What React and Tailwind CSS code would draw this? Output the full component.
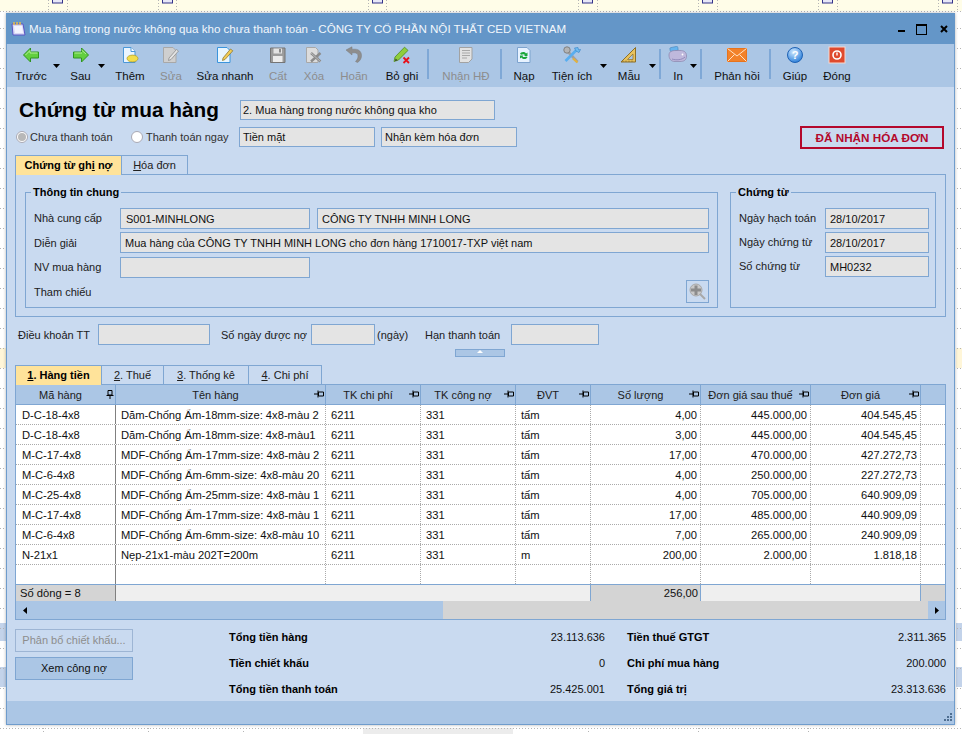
import { Fragment } from 'react'

const Back = () => (
  <svg className="absolute inset-0 w-[962px] h-[734px]" viewBox="0 0 962 734">
    <rect x="0" y="0" width="962" height="11" fill="#fffde8" />
    <rect x="0" y="348" width="6" height="20" fill="#fff6d8" />
    <rect x="956" y="348" width="6" height="20" fill="#fff6d8" />
    <rect x="0" y="623" width="6" height="18" fill="#c3d3ea" />
    <rect x="0" y="667" width="6" height="20" fill="#c3d3ea" />
    <rect x="956" y="623" width="6" height="18" fill="#c3d3ea" />
    <rect x="956" y="667" width="6" height="20" fill="#c3d3ea" />
    <rect x="363" y="728" width="150" height="6" fill="#ececec" />
    {[28, 48, 68, 88, 108, 128, 148, 168, 188, 208, 228, 248, 268, 288, 308, 328, 348, 368, 388, 408, 428, 448, 468, 488, 508, 528, 548, 568, 588, 608, 628, 648, 668, 688, 708, 728].map((y) => (
      <line key={y} x1="0" x2="962" y1={y + 0.5} y2={y + 0.5} stroke="#b5b5b5" strokeDasharray="1 2" />
    ))}
    <line x1="0" x2="962" y1="11.5" y2="11.5" stroke="#b5b5b5" strokeDasharray="1 2" />
    {[48, 67, 158, 176, 368, 386, 578, 597, 698, 717, 818, 837, 938, 957].map((x) => (
      <line key={x} x1={x + 0.5} x2={x + 0.5} y1="0" y2="11" stroke="#b5b5b5" strokeDasharray="1 2" />
    ))}
    {[43, 148, 243, 588, 698, 808].map((x) => (
      <line key={x} x1={x + 0.5} x2={x + 0.5} y1="728" y2="734" stroke="#b5b5b5" strokeDasharray="1 2" />
    ))}
    {[52, 162, 372, 582, 702, 822, 942].map((x) => (
      <rect key={x} x={x + 0.5} y="-4" width="10" height="7" fill="#e8e8f8" stroke="#33338a" />
    ))}
  </svg>
)

const ArrowLeft = () => (
  <svg width="18" height="18" viewBox="0 0 18 18"><path d="M1.5 9 L8.5 2 V6 H16.5 V12 H8.5 V16 Z" fill="#62cf3f" stroke="#2f9420" strokeLinejoin="round" /><path d="M3.5 9 L8 4.5 V7 H15.5" fill="none" stroke="#b4ef98" /></svg>
)
const ArrowRight = () => (
  <svg width="18" height="18" viewBox="0 0 18 18"><path d="M16.5 9 L9.5 2 V6 H1.5 V12 H9.5 V16 Z" fill="#62cf3f" stroke="#2f9420" strokeLinejoin="round" /><path d="M9.5 4 L14 8 M2.5 7 H10" fill="none" stroke="#b4ef98" /></svg>
)
const Page = ({ fill = '#eaf5ff', stroke = '#4a97d8' }) => (
  <path d="M2.5 1.5 H10 L14 5.5 V16.5 H2.5 Z" fill={fill} stroke={stroke} />
)
const Them = () => (
  <svg width="18" height="18" viewBox="0 0 18 18"><Page /><path d="M10 1.5 V5.5 H14" fill="#fff" stroke="#4a97d8" /><ellipse cx="11.5" cy="12.5" rx="5.5" ry="3.4" fill="#f3dd4a" stroke="#a8952a" strokeWidth="0.7" /></svg>
)
const Sua = () => (
  <svg width="18" height="18" viewBox="0 0 18 18"><path d="M1.5 1.5 H11 L14 4.5 V16.5 H1.5 Z" fill="#cfcfcf" stroke="#a8a8a8" /><path d="M7 12 L14.5 3.5 L16.5 5 L9 13.5 L6.5 14.5 Z" fill="#e4e4e4" stroke="#8e8e8e" strokeWidth="0.8" /></svg>
)
const SuaNhanh = () => (
  <svg width="18" height="18" viewBox="0 0 18 18"><path d="M1.5 1.5 H11 L14 4.5 V16.5 H1.5 Z" fill="#e9f6ff" stroke="#3a94dc" /><path d="M7 12 L14.5 3 L16.8 4.8 L9 13.5 L6.5 14.5 Z" fill="#f3cd55" stroke="#8f7a35" strokeWidth="0.8" /></svg>
)
const Cat = () => (
  <svg width="18" height="18" viewBox="0 0 18 18"><path d="M1.5 2 H16 V16.5 H1.5 Z" fill="#9c9c9c" stroke="#757575" /><rect x="4.5" y="2.5" width="8.5" height="5" fill="#e3e3e3" /><rect x="4" y="10" width="9.5" height="6" fill="#ececec" /><rect x="10" y="3" width="2" height="3.5" fill="#8a8a8a" /></svg>
)
const Xoa = () => (
  <svg width="18" height="18" viewBox="0 0 18 18"><path d="M1.5 1.5 H10.5 L13 4 V16.5 H1.5 Z" fill="#dcdcdc" stroke="#a8a8a8" /><path d="M6 7 L15.5 15.5 M15.5 7 L6 15.5" stroke="#8b8b8b" strokeWidth="2.4" /><path d="M6 7 L15.5 15.5" stroke="#c4c4c4" strokeWidth="0.8" /></svg>
)
const Hoan = () => (
  <svg width="18" height="18" viewBox="0 0 18 18"><path d="M1 4 L7 0.8 V3.2 H10 C14 3.2 16.5 6 16.5 9.5 C16.5 12.5 15 15 12.5 16.5 L10.5 15.5 C12.5 13.5 13 11.5 13 10 C13 8 11.5 6.8 9.5 6.8 H7 V9 Z" fill="#8e8e8e" stroke="#7a7a7a" strokeWidth="0.5" /></svg>
)
const BoGhi = () => (
  <svg width="18" height="18" viewBox="0 0 18 18"><path d="M1 15.5 L2 11 L11.5 1.2 L15 4.4 L5.5 14 Z" fill="#8fce3b" stroke="#4f8a1f" strokeWidth="0.8" /><path d="M2 15 L2.6 12.5 L4.5 14.2 Z" fill="#333" /><path d="M10.5 11.5 L16 17 M16 11.5 L10.5 17" stroke="#e8101a" strokeWidth="1.8" /></svg>
)
const NhanHd = () => (
  <svg width="18" height="18" viewBox="0 0 18 18"><path d="M2.5 1.5 H15 V13 L11.5 16.5 H2.5 Z" fill="#e2e2e2" stroke="#a2a2a2" /><path d="M5 4.5 H13 M5 7 H13 M5 9.5 H13 M5 12 H10" stroke="#a8a8a8" /></svg>
)
const Nap = () => (
  <svg width="18" height="18" viewBox="0 0 18 18"><path d="M2.5 1.5 H12 L15 4.5 V16.5 H2.5 Z" fill="#e7f2ff" stroke="#7da3ce" /><path d="M5 8 C5.5 5.8 9.5 5 11 7.5 L12.5 6.5 V10 H9 L10 9 C9 8 7.5 8 6.5 8.8 Z" fill="#1aa63a" /><path d="M12.5 11 C12 13.2 8 14 6.5 11.5 L5 12.5 V9.5 H8.5 L7.5 10.5 C8.5 11.3 10 11.2 11 10.4 Z" fill="#1aa63a" /></svg>
)
const TienIch = () => (
  <svg width="20" height="18" viewBox="0 0 20 18"><path d="M4 3.5 L15.5 16" stroke="#a0a0a0" strokeWidth="2.6" /><circle cx="5" cy="4" r="3.2" fill="#b4b4b4" stroke="#808080" /><path d="M3.5 15 L14 4.5" stroke="#58aef0" strokeWidth="2.6" /><path d="M12.5 2 L14 5 L17 6.5 L18.5 3.5 L16.5 3.8 L16 1.5 Z" fill="#6fbdf3" stroke="#2f7fc4" strokeWidth="0.6" /><path d="M11 12.5 L15.5 16.5" stroke="#e2b23f" strokeWidth="2.2" /></svg>
)
const Mau = () => (
  <svg width="18" height="18" viewBox="0 0 18 18"><path d="M1 16 L15.5 1.5 V16 Z" fill="#e8c25e" stroke="#8c6f28" /><path d="M7.5 13.5 L13 8 V13.5 Z" fill="#abc6e5" stroke="#8c6f28" strokeWidth="0.7" /><path d="M3 16 V14.5 M6 16 V14.5 M9 16 V14.5 M12 16 V14.5" stroke="#7a5f20" strokeWidth="0.6" /></svg>
)
const InIcon = () => (
  <svg width="20" height="18" viewBox="0 0 20 18"><rect x="2" y="1" width="8" height="4" rx="1" transform="rotate(-12 6 3)" fill="#66b4ee" stroke="#4786bd" strokeWidth="0.6" /><path d="M1 9 C1 5.5 4 4.5 8 4.5 H12 C16 4.5 18.5 6 18.5 10 C18.5 14 16 15.5 12 15.5 H7 C3 15.5 1 13 1 9 Z" fill="#bfb8dc" stroke="#8984aa" strokeWidth="0.7" /><path d="M4 13 C8 14.5 14 14 17 11" fill="none" stroke="#9089ba" /><circle cx="14.5" cy="8.5" r="0.9" fill="#fff" /></svg>
)
const Mail = () => (
  <svg width="20" height="16" viewBox="0 0 20 16"><rect x="0.5" y="1.5" width="19" height="13" fill="#f2822a" stroke="#e8731c" /><path d="M0.5 1.5 L10 9 L19.5 1.5 M0.5 14.5 L7.5 7.5 M19.5 14.5 L12.5 7.5" fill="none" stroke="#ffe2c4" /></svg>
)
const Help = () => (
  <svg width="18" height="18" viewBox="0 0 18 18">
    <defs><radialGradient id="hg" cx="0.4" cy="0.3" r="0.8"><stop offset="0" stopColor="#cfe8ff" /><stop offset="1" stopColor="#1a74d6" /></radialGradient></defs>
    <circle cx="9" cy="9" r="7.5" fill="url(#hg)" stroke="#1f62b4" />
    <text x="9" y="13" textAnchor="middle" fontSize="11" fontWeight="700" fontFamily="Liberation Sans, sans-serif" fill="#fff">?</text>
  </svg>
)
const Power = () => (
  <svg width="18" height="18" viewBox="0 0 18 18"><rect x="1" y="1" width="16" height="16" fill="#df4a2e" stroke="#f6d8cf" /><circle cx="9" cy="9" r="4" fill="none" stroke="#fff" strokeWidth="1.6" /><path d="M9 6.5 V9.5" stroke="#fff" strokeWidth="1.4" /></svg>
)
const Zoom = () => (
  <svg width="17" height="17" viewBox="0 0 17 17"><circle cx="7" cy="7" r="6" fill="#c8c8c8" stroke="#a8a8a8" /><path d="M11 11 L16 16" stroke="#a8a8a8" strokeWidth="2" /><path d="M7 2.5 V12 M2 7 H12" stroke="#8c8c8c" strokeWidth="3" /></svg>
)

const Caret = ({ className }) => (
  <div className={`h-[38px] flex items-start justify-center pt-[20px] ${className}`}>
    <svg width="7" height="4" viewBox="0 0 7 4"><path d="M0 0 H7 L3.5 4 Z" fill="#000" /></svg>
  </div>
)
const Sep = ({ className = '' }) => <div className={`w-[2px] h-[30px] mt-[5px] shrink-0 bg-[#7fa8d6] ${className}`} />

function Tool({ icon: Icon, label, off, className }) {
  return (
    <div className={`shrink-0 flex flex-col items-center ${className}`}>
      <div className="h-[22px] flex items-center justify-center"><Icon /></div>
      <div className={`mt-[3px] leading-[14px] whitespace-nowrap text-[11.5px] ${off ? 'text-[#8d8d8d]' : 'text-[#101010]'}`}>{label}</div>
    </div>
  )
}

const Field = ({ className = '', children }) => (
  <div className={`h-[21px] leading-[20px] border border-[#7fa6d2] bg-[#e4e4e4] pl-[5px] text-[#101010] whitespace-nowrap overflow-hidden shrink-0 ${className}`}>{children}</div>
)

const Pin = ({ upright }) => upright ? (
  <svg width="8" height="9" viewBox="0 0 8 9"><path d="M2 0.5 H6 V5 H2 Z M0.5 5.5 H7.5 M4 5.5 V9" fill="none" stroke="#000" /></svg>
) : (
  <svg width="10" height="8" viewBox="0 0 10 8"><path d="M9.5 2 V6 H4.5 V2 Z M4 0.5 V7.5 M0 4 H4" fill="none" stroke="#000" /></svg>
)

const cols = 'grid grid-cols-[100px_210px_95px_95px_75px_110px_110px_110px_24px]'

const heads = ['Mã hàng', 'Tên hàng', 'TK chi phí', 'TK công nợ', 'ĐVT', 'Số lượng', 'Đơn giá sau thuế', 'Đơn giá']

const rows = [
  ['D-C-18-4x8', 'Dăm-Chống Ẩm-18mm-size: 4x8-màu 2', '6211', '331', 'tấm', '4,00', '445.000,00', '404.545,45'],
  ['D-C-18-4x8', 'Dăm-Chống Ẩm-18mm-size: 4x8-màu1', '6211', '331', 'tấm', '3,00', '445.000,00', '404.545,45'],
  ['M-C-17-4x8', 'MDF-Chống Ẩm-17mm-size: 4x8-màu 2', '6211', '331', 'tấm', '17,00', '470.000,00', '427.272,73'],
  ['M-C-6-4x8', 'MDF-Chống Ẩm-6mm-size: 4x8-màu 20', '6211', '331', 'tấm', '4,00', '250.000,00', '227.272,73'],
  ['M-C-25-4x8', 'MDF-Chống Ẩm-25mm-size: 4x8-màu 1', '6211', '331', 'tấm', '4,00', '705.000,00', '640.909,09'],
  ['M-C-17-4x8', 'MDF-Chống Ẩm-17mm-size: 4x8-màu 1', '6211', '331', 'tấm', '17,00', '485.000,00', '440.909,09'],
  ['M-C-6-4x8', 'MDF-Chống Ẩm-6mm-size: 4x8-màu 10', '6211', '331', 'tấm', '7,00', '265.000,00', '240.909,09'],
  ['N-21x1', 'Nẹp-21x1-màu 202T=200m', '6211', '331', 'm', '200,00', '2.000,00', '1.818,18'],
  ['', '', '', '', '', '', '', ''],
]

const totals = [
  ['Tổng tiền hàng', '23.113.636', 'Tiền thuế GTGT', '2.311.365'],
  ['Tiền chiết khấu', '0', 'Chi phí mua hàng', '200.000'],
  ['Tổng tiền thanh toán', '25.425.001', 'Tổng giá trị', '23.313.636'],
]

export default function App() {
  return (
    <div className="relative w-[962px] h-[734px] overflow-hidden bg-white font-['Liberation_Sans',sans-serif] text-[11px] text-[#101010]">
      <Back />
      <div className="absolute left-[6px] top-[13px] w-[949px] h-[712px] flex flex-col border-x border-b border-[#6f9ccc] shadow-[0_0_3px_rgba(0,0,0,0.3)]">
        {/* title bar */}
        <div className="h-[31px] shrink-0 bg-[#6496c8] flex items-center text-white -mx-px pl-[4px] pt-px">
          <svg width="16" height="16" viewBox="0 0 16 16" className="mr-[3px]">
            <path d="M2 3 H13 L15 14 H3 Z" fill="#d8d8f4" stroke="#5a55c4" />
            <path d="M4 5 H12 L13 12 H5 Z" fill="#f4f4ff" />
            <path d="M4 1 V4 M7 1 V4 M10 1 V4" stroke="#f0c040" strokeWidth="1.4" />
          </svg>
          <span className="text-[11.6px] text-[#f2f7fc] whitespace-nowrap">Mua hàng trong nước không qua kho chưa thanh toán - CÔNG TY CỔ PHẦN NỘI THẤT CED VIETNAM</span>
          <div className="ml-auto flex items-center mr-[7px]">
            <div className="w-[7px] h-[2px] bg-black mr-[11px] mt-[4px]" />
            <div className="w-[9px] h-[8px] border border-black border-t-[2px] mr-[13px] box-content" />
            <svg width="8" height="8" viewBox="0 0 8 8"><path d="M1 1 L7 7 M7 1 L1 7" stroke="#000" strokeWidth="2" /></svg>
          </div>
        </div>

        {/* toolbar */}
        <div className="h-[43px] shrink-0 bg-[#abc6e5] flex items-start pl-[3px]">
          <Tool icon={ArrowLeft} label="Trước" className="w-[42px]" />
          <Caret className="w-[8px]" />
          <Tool icon={ArrowRight} label="Sau" className="w-[33px] ml-[4px]" />
          <Caret className="w-[8px]" />
          <Tool icon={Them} label="Thêm" className="w-[50px]" />
          <Tool icon={Sua} label="Sửa" off className="w-[32px]" />
          <Tool icon={SuaNhanh} label="Sửa nhanh" className="w-[76px]" />
          <Tool icon={Cat} label="Cất" off className="w-[30px]" />
          <Tool icon={Xoa} label="Xóa" off className="w-[42px]" />
          <Tool icon={Hoan} label="Hoãn" off className="w-[38px]" />
          <Tool icon={BoGhi} label="Bỏ ghi" className="w-[48px] ml-[5px]" />
          <Sep className="ml-[1px]" />
          <Tool icon={NhanHd} label="Nhận HĐ" off className="w-[68px] ml-[3px]" />
          <Sep />
          <Tool icon={Nap} label="Nạp" className="w-[44px]" />
          <Tool icon={TienIch} label="Tiện ích" className="w-[52px]" />
          <Caret className="w-[8px] ml-[1px]" />
          <Tool icon={Mau} label="Mẫu" className="w-[38px] ml-[3px]" />
          <Caret className="w-[8px]" />
          <Sep className="ml-[3px]" />
          <Tool icon={InIcon} label="In" className="w-[22px] ml-[6px]" />
          <Caret className="w-[8px]" />
          <Sep className="ml-[3px]" />
          <Tool icon={Mail} label="Phản hồi" className="w-[64px] ml-[3px]" />
          <Sep />
          <Tool icon={Help} label="Giúp" className="w-[48px]" />
          <Tool icon={Power} label="Đóng" className="w-[36px]" />
        </div>

        {/* body */}
        <div className="h-[614px] shrink-0 bg-[#c9daf0] px-[8px] pt-[13px]">
          <div className="flex h-[20px] items-center">
            <div className="w-[225px] pl-[4px] text-[20.8px] leading-[20px] font-bold text-black whitespace-nowrap">Chứng từ mua hàng</div>
            <Field className="w-[255px] !h-[20px] !pl-[2px] !leading-[19px]">2. Mua hàng trong nước không qua kho</Field>
          </div>

          <div className="flex h-[20px] mt-[7px] items-start">
            <div className="w-[116px] flex items-center h-[20px] pl-[1px]">
              <div className="w-[12px] h-[12px] rounded-full bg-white border border-[#a9a9b4] flex items-center justify-center"><div className="w-[8px] h-[8px] rounded-full bg-[#b8b8b8]" /></div>
              <span className="ml-[2px] text-[#303030] whitespace-nowrap">Chưa thanh toán</span>
            </div>
            <div className="w-[108px] flex items-center h-[20px]">
              <div className="w-[12px] h-[12px] rounded-full bg-white border border-[#a9a9b4]" />
              <span className="ml-[3px] text-[#303030] whitespace-nowrap">Thanh toán ngay</span>
            </div>
            <Field className="w-[136px] !h-[20px] !pl-[3px] !leading-[19px]">Tiền mặt</Field>
            <Field className="w-[136px] ml-[6px] !h-[20px] !pl-[3px] !leading-[19px]">Nhận kèm hóa đơn</Field>
            <div className="ml-[283px] w-[144px] h-[23px] -mt-px shrink-0 border-2 border-[#b4082c] text-[#b4082c] text-[11.7px] font-bold text-center leading-[20px] whitespace-nowrap">ĐÃ NHẬN HÓA ĐƠN</div>
          </div>

          {/* top tabs */}
          <div className="flex mt-[8px] h-[19px] relative z-10">
            <div className="w-[106px] h-[20px] border-t border-l border-[#7fa6d2] bg-[#ffe39a] font-bold text-center leading-[18px] text-black whitespace-nowrap">Chứng từ gh<u>i</u> nợ</div>
            <div className="w-[67px] h-[19px] border border-b-0 border-[#7fa6d2] text-center leading-[18px] text-[#202020]"><u>H</u>óa đơn</div>
          </div>
          <div className="h-[143px] border border-[#7fa6d2] px-[9px] pt-[17px] flex">
            <div className="relative w-[693px] h-[116px] border border-[#7fa6d2] pl-[8px] pt-[15px] shrink-0">
              <span className="absolute left-[5px] -top-[9px] px-[2px] bg-[#c9daf0] font-bold text-black leading-[16px]">Thông tin chung</span>
              <div className="flex">
                <div className="w-[86px] leading-[21px] text-[#202020]">Nhà cung cấp</div>
                <Field className="w-[190px]">S001-MINHLONG</Field>
                <Field className="w-[392px] ml-[7px] !pl-[4px]">CÔNG TY TNHH MINH LONG</Field>
              </div>
              <div className="flex mt-[3px]">
                <div className="w-[86px] leading-[22px] text-[#202020]">Diễn giải</div>
                <Field className="w-[589px] !pl-[4px]">Mua hàng của CÔNG TY TNHH MINH LONG cho đơn hàng 1710017-TXP việt nam</Field>
              </div>
              <div className="flex mt-[3px]">
                <div className="w-[86px] leading-[21px] text-[#202020]">NV mua hàng</div>
                <Field className="w-[190px]" />
              </div>
              <div className="flex mt-[2px] h-[23px] items-center justify-between w-[675px]">
                <div className="text-[#202020] pt-px">Tham chiếu</div>
                <div className="w-[23px] h-[23px] border border-[#7fa6d2] flex items-center justify-center"><Zoom /></div>
              </div>
            </div>
            <div className="relative w-[206px] h-[116px] border border-[#7fa6d2] ml-[12px] pl-[8px] pt-[15px] shrink-0">
              <span className="absolute left-[5px] -top-[9px] px-[2px] bg-[#c9daf0] font-bold text-black leading-[16px]">Chứng từ</span>
              {[['Ngày hạch toán', '28/10/2017'], ['Ngày chứng từ', '28/10/2017'], ['Số chứng từ', 'MH0232']].map(([l, v]) => (
                <div key={l} className="flex mb-[3px]">
                  <div className="w-[86px] leading-[21px] text-[#202020] whitespace-nowrap">{l}</div>
                  <Field className="w-[104px] !pl-[4px]">{v}</Field>
                </div>
              ))}
            </div>
          </div>

          {/* terms */}
          <div className="flex mt-[7px] h-[21px] items-center">
            <div className="w-[83px] pl-[3px] pt-px text-[#202020] whitespace-nowrap">Điều khoản TT</div>
            <Field className="w-[112px]" />
            <div className="w-[101px] pl-[11px] pt-px text-[#202020] whitespace-nowrap">Số ngày được nợ</div>
            <Field className="w-[64px]" />
            <div className="w-[50px] pl-[2px] pt-px text-[#202020]">(ngày)</div>
            <div className="w-[86px] pt-px text-[#202020] whitespace-nowrap">Hạn thanh toán</div>
            <Field className="w-[88px]" />
          </div>
          <div className="ml-[440px] mt-[4px] w-[50px] h-[8px] bg-[#abc6e5] border border-[#7fa6d2] flex justify-center">
            <svg width="6" height="3" viewBox="0 0 6 3"><path d="M0 3 L3 0 L6 3 Z" fill="#fff" /></svg>
          </div>

          {/* detail tabs */}
          <div className="flex mt-[8px] h-[19px] relative z-10">
            <div className="w-[86px] h-[20px] border-t border-l border-[#7fa6d2] bg-[#ffe39a] font-bold text-center leading-[18px] text-black whitespace-nowrap"><u>1</u>. Hàng tiền</div>
            <div className="w-[63px] h-[19px] border border-b-0 border-[#7fa6d2] text-center leading-[18px] text-[#202020]"><u>2</u>. Thuế</div>
            <div className="w-[85px] h-[19px] border border-b-0 border-l-0 border-[#7fa6d2] text-center leading-[18px] text-[#202020]"><u>3</u>. Thống kê</div>
            <div className="w-[73px] h-[19px] border border-b-0 border-l-0 border-[#7fa6d2] text-center leading-[18px] text-[#202020]"><u>4</u>. Chi phí</div>
          </div>

          {/* grid */}
          <div className="h-[236px] border border-[#7fa6d2] bg-white flex flex-col text-[11.2px]">
            <div className={`${cols} h-[20px] bg-[#abc6e5] border-b border-[#7fa6d2] text-[11px]`}>
              {heads.map((h, i) => (
                <div key={h} className="relative border-r border-[#7fa6d2] text-center leading-[20px] pr-[10px] text-[#202020] whitespace-nowrap">
                  {h}
                  <span className="absolute right-px top-[5px] flex">
                    <Pin upright={i === 0} />
                  </span>
                </div>
              ))}
              <div />
            </div>
            {rows.map((r, i) => (
              <div key={i} className={`${cols} ${i === 8 ? 'h-[19px]' : 'h-[20px] border-b border-dotted border-[#aaaaaa]'}`}>
                {r.map((c, j) => (
                  <div
                    key={j}
                    className={`leading-[20px] whitespace-nowrap overflow-hidden ${j === 0 ? 'border-r border-[#808080] pl-[6px]' : 'border-r border-dotted border-[#aaaaaa]'} ${j > 0 && j < 5 ? 'pl-[5px]' : ''} ${j >= 5 ? 'text-right pr-[3px]' : ''}`}
                  >
                    {c}
                  </div>
                ))}
                <div />
              </div>
            ))}
            <div className={`${cols} h-[17px] border-y border-[#7fa6d2] bg-[#efefef] box-content -mb-px`}>
              <div className="bg-[#d4d4d4] border-r border-[#808080] pl-[4px] leading-[16px]">Số dòng = 8</div>
              <div className="col-span-4 border-r border-[#7fa6d2]" />
              <div className="bg-[#d4d4d4] border-r border-[#7fa6d2] text-right pr-[2px] leading-[16px]">256,00</div>
              <div className="col-span-2 border-r border-[#7fa6d2]" />
              <div className="bg-[#d4d4d4]" />
            </div>
            <div className="h-[18px] flex bg-[#d4d4d4]">
              <div className="w-[427px] bg-[#abc6e5] flex items-center pl-[7px]">
                <svg width="4" height="7" viewBox="0 0 4 7"><path d="M4 0 V7 L0 3.5 Z" fill="#000" /></svg>
              </div>
              <div className="ml-auto w-[17px] bg-[#abc6e5] flex items-center pl-[7px]">
                <svg width="4" height="7" viewBox="0 0 4 7"><path d="M0 0 V7 L4 3.5 Z" fill="#000" /></svg>
              </div>
            </div>
          </div>

          {/* totals */}
          <div className="flex items-start mt-[4px]">
            <div className="w-[118px] mt-[5px] shrink-0">
              <div className="h-[23px] border border-[#9db5d4] text-center leading-[21px] text-[#8d8d8d]">Phân bổ chiết khấu...</div>
              <div className="h-[23px] mt-[5px] border border-[#7fa6d2] bg-[#abc6e5] text-center leading-[21px]">Xem công nợ</div>
            </div>
            <div className="ml-[96px] grid grid-cols-[376px_319px] gap-x-[22px]">
              {totals.map((t) => (
                <Fragment key={t[0]}>
                  <div className="h-[26px] leading-[26px] flex justify-between">
                    <span className="font-bold text-black">{t[0]}</span><span>{t[1]}</span>
                  </div>
                  <div className="h-[26px] leading-[26px] flex justify-between">
                    <span className="font-bold text-black">{t[2]}</span><span>{t[3]}</span>
                  </div>
                </Fragment>
              ))}
            </div>
          </div>
        </div>

        {/* status bar */}
        <div className="flex-1 bg-[#abc6e5] flex justify-end items-end pr-px pb-px">
          <svg width="10" height="10" viewBox="0 0 10 10" fill="#4f6f92">
            <rect x="7" y="0" width="2" height="2" /><rect x="4" y="3" width="2" height="2" /><rect x="7" y="3" width="2" height="2" />
            <rect x="1" y="6" width="2" height="2" /><rect x="4" y="6" width="2" height="2" /><rect x="7" y="6" width="2" height="2" />
          </svg>
        </div>
      </div>
    </div>
  )
}
